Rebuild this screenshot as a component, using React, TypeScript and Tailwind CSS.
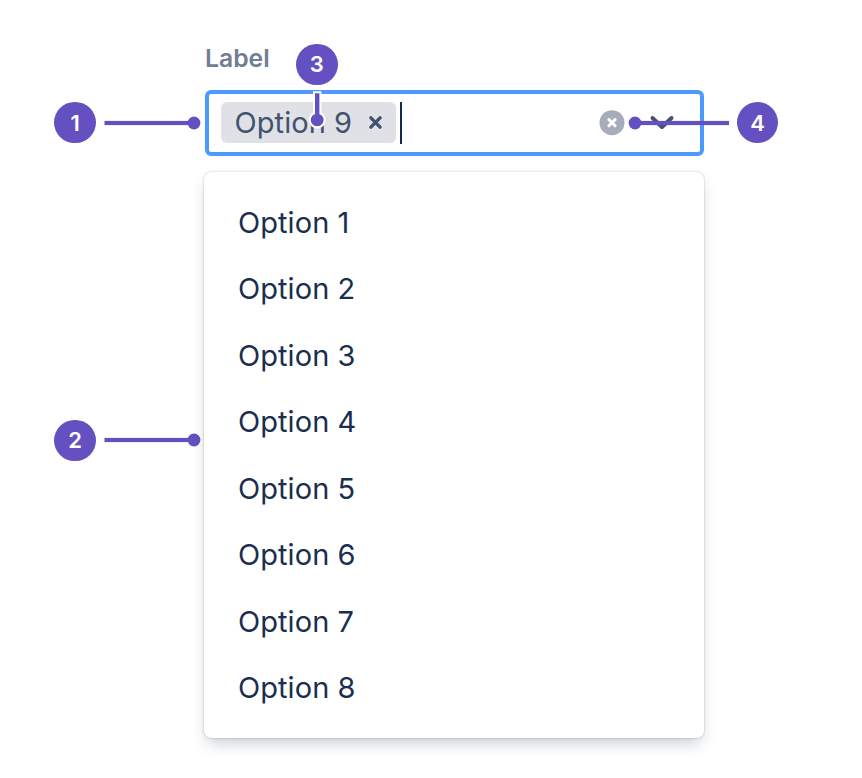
import { ReactNode } from "react";

const options = ["Option 1", "Option 2", "Option 3", "Option 4", "Option 5", "Option 6", "Option 7", "Option 8"];

function Badge({ children }: { children: ReactNode }) {
  return (
    <span className="flex size-[41.5px] shrink-0 items-center justify-center rounded-full bg-[#6450c0] text-[22px] leading-none font-semibold text-white">
      {children}
    </span>
  );
}

function LeftCallout({ children }: { children: ReactNode }) {
  return (
    <div className="flex items-center gap-2">
      <Badge>{children}</Badge>
      <svg width="98" height="14" viewBox="0 0 98 14" fill="#6450c0">
        <rect x="0.5" y="4.9" width="90" height="4.2" />
        <circle cx="90" cy="7" r="6.4" />
      </svg>
    </div>
  );
}

function Tag() {
  return (
    <span className="flex h-[41.5px] w-[175px] items-center justify-between rounded-[6px] bg-[#dfe1e6] pr-[13px] pl-[13.5px] text-[29px] tracking-[0.07px] text-[#42526e]">
      <span className="whitespace-nowrap">Option 9</span>
      <svg width="15" height="15" viewBox="0 0 15 15" fill="none" stroke="#42526e" strokeWidth="3.4" strokeLinecap="round">
        <path d="M2.9 2.9l9.2 9.2M12.1 2.9l-9.2 9.2" />
      </svg>
    </span>
  );
}

function SelectControl() {
  return (
    <div className="flex h-[66px] items-center justify-between rounded-[6px] border-4 border-[#4c9aff] bg-white pr-[24.5px] pl-[12.5px]">
      <div className="flex items-center gap-1">
        <Tag />
        <span className="h-[42px] w-[2px] bg-[#172b4d]" />
      </div>
      <div className="flex items-center gap-6">
        <svg width="26" height="26" viewBox="0 0 26 26" fill="none">
          <circle cx="13" cy="12.7" r="12.5" fill="#a5adba" />
          <path d="M9.9 9.6l6.2 6.2M16.1 9.6l-6.2 6.2" stroke="#fff" strokeWidth="3" strokeLinecap="round" />
        </svg>
        <svg width="26" height="18" viewBox="0 0 26 18" fill="none" stroke="#42526e" strokeWidth="4" strokeLinecap="round" strokeLinejoin="round">
          <path d="M3.5 4l9.5 9l9.5-9" />
        </svg>
      </div>
    </div>
  );
}

export default function App() {
  return (
    <div className="flex h-[778px] w-[862px] overflow-hidden bg-white font-['Inter',sans-serif]">
      <aside className="flex w-[204px] flex-col gap-[276.3px] pt-[101.8px] pl-[54.4px]">
        <LeftCallout>1</LeftCallout>
        <LeftCallout>2</LeftCallout>
      </aside>

      <main className="relative flex w-[500px] flex-col pt-[42px]">
        <label className="h-[47.5px] pl-px text-[24.7px] leading-[32px] font-semibold text-[#727e94]">Label</label>
        <div className="px-[0.5px]">
          <SelectControl />
        </div>
        <ul className="mx-[0.4px] mt-[16.8px] h-[565.5px] rounded-[7px] bg-white pt-[17.2px] shadow-[0_0_2px_rgba(9,30,66,0.31),0_8px_16px_-4px_rgba(9,30,66,0.25)]">
          {options.map((option) => (
            <li key={option} className="flex h-[66.5px] items-center pl-[33.6px] text-[29px] tracking-[0.07px] text-[#1a2e50]">
              {option}
            </li>
          ))}
        </ul>

        <div className="absolute top-[43.7px] left-[92px] flex flex-col items-center gap-[5px]">
          <Badge>3</Badge>
          <svg width="18" height="40" viewBox="0 0 18 40" fill="#6450c0">
            <path d="M7 3.3h4.4v20.6a6.4 6.4 0 1 1-4.4 0z" stroke="#fff" strokeWidth="4" paintOrder="stroke" />
          </svg>
        </div>
      </main>

      <aside className="pt-[101.8px] pl-[32.8px]">
        <div className="relative flex items-center">
          <svg className="absolute right-[49.5px]" width="102" height="14" viewBox="0 0 102 14" fill="#6450c0">
            <rect x="8.4" y="4.9" width="93.6" height="4.2" />
            <circle cx="8" cy="7" r="6.4" />
          </svg>
          <Badge>4</Badge>
        </div>
      </aside>
    </div>
  );
}
